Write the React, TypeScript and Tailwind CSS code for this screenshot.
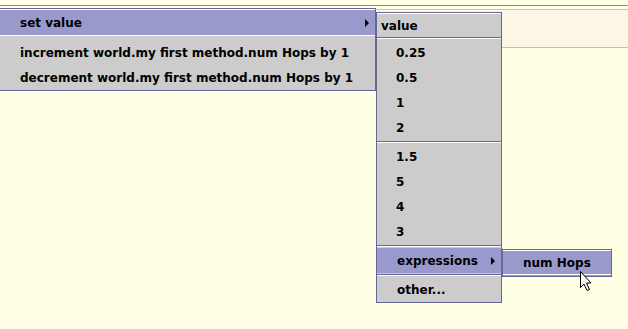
import React from 'react';

const text = "font-['DejaVu_Sans',sans-serif] font-bold text-[12px] leading-none text-black";

// small right-pointing submenu arrow
function Arrow() {
  return <span className="block h-0 w-0 border-y-[4px] border-l-[4px] border-y-transparent border-l-black" />;
}

function Sep() {
  return (
    <div className="h-[4px] pt-px">
      <div className="h-px bg-[#666699]" />
      <div className="h-px bg-white" />
    </div>
  );
}

function Row({ label, pad = 'pl-[19px]', active = false, arrow = false }: { label: string; pad?: string; active?: boolean; arrow?: boolean }) {
  return (
    <div className={`flex h-[25px] items-center justify-between pr-[6px] ${pad} ${active ? 'bg-[#9999cc]' : ''}`}>
      <span className={text}>{label}</span>
      {arrow && <Arrow />}
    </div>
  );
}

export default function App() {
  const firstGroup = ['0.25', '0.5', '1', '2'];
  const secondGroup = ['1.5', '5', '4', '3'];

  return (
    <div className="relative h-[329px] w-[628px] overflow-hidden bg-[#ffffe6]">
      {/* background strip behind the popups */}
      <div className="pt-[5px]">
        <div className="h-px bg-[#8c8c7c]" />
        <div className="mt-[3px] h-px bg-[#c8c6c0]" />
        <div className="h-[38px] border-b border-[#c0c0c0] bg-[#fdf5e6]" />
      </div>

      {/* main popup */}
      <div className="absolute left-[-1px] top-[8px] w-[377px] border border-[#666699] bg-[#cccccc]">
        <div className="h-px bg-white" />
        <Row label="set value" pad="pl-[20px]" active arrow />
        <div className="h-[5px] border-t border-white" />
        <Row label="increment world.my first method.num Hops by 1" pad="pl-[20px]" />
        <Row label="decrement world.my first method.num Hops by 1" pad="pl-[20px]" />
      </div>

      {/* value submenu */}
      <div className="absolute left-[376px] top-[12px] w-[126px] border border-[#666699] bg-[#cccccc]">
        <div className="h-px bg-white" />
        <div className="flex h-[23px] items-center pl-[4px]">
          <span className={text}>value</span>
        </div>
        <div className="h-[3px]">
          <div className="h-px bg-[#666699]" />
          <div className="h-px bg-white" />
        </div>
        {firstGroup.map((v) => (
          <Row key={v} label={v} />
        ))}
        <Sep />
        {secondGroup.map((v) => (
          <Row key={v} label={v} />
        ))}
        <Sep />
        <Row label="expressions" pad="pl-[20px]" active arrow />
        <Sep />
        <Row label="other..." pad="pl-[20px]" />
      </div>

      {/* expressions submenu */}
      <div className="absolute left-[502px] top-[249px] w-[110px] border border-[#666699] bg-[#9999cc]">
        <div className="h-px bg-white" />
        <div className="flex h-[23px] items-center pl-[20px]">
          <span className={text}>num Hops</span>
        </div>
        <div className="h-px bg-white" />
        <div className="h-px" />
      </div>

      {/* mouse pointer */}
      <svg className="absolute left-[579px] top-[270px]" width="14" height="22" viewBox="0 0 14 22">
        <path d="M1.5 1.5 L1.5 17.5 L5 14 L8 20.5 L10.5 19.5 L7.5 13 L12 13 Z" fill="white" stroke="black" strokeWidth="1" strokeLinejoin="miter" />
      </svg>
    </div>
  );
}
